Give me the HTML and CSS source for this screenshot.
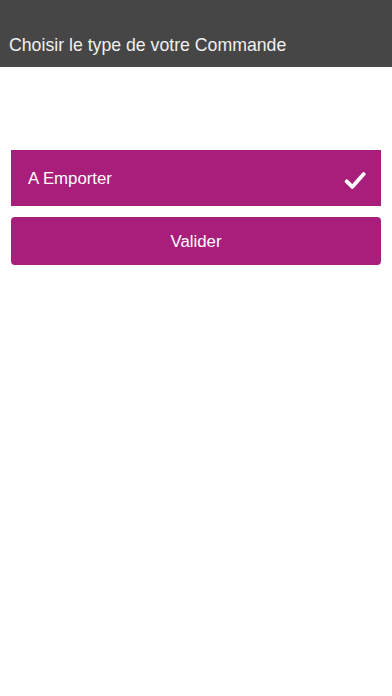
FILE: index.html
```html
<!DOCTYPE html>
<html lang="fr">
<head>
<meta charset="utf-8">
<meta name="viewport" content="width=device-width, initial-scale=1">
<title>Choisir le type de votre Commande</title>
<link rel="stylesheet" href="styles.css">
</head>
<body>
<header class="topbar">
  <h1 class="title">Choisir le type de votre Commande</h1>
</header>
<main class="content">
  <div class="option">
    <span class="option-label">A Emporter</span>
    <svg class="check" viewBox="0 0 24 20" width="22" height="19" aria-hidden="true">
      <path d="M3 11 L9 17 L21.5 3" fill="none" stroke="#fff" stroke-width="4.2" stroke-linecap="round" stroke-linejoin="round"/>
    </svg>
  </div>
  <button class="validate" type="button">Valider</button>
</main>
</body>
</html>
```
FILE: styles.css
```css
html, body {
  margin: 0;
  padding: 0;
  background: #ffffff;
  font-family: "Liberation Sans", Arial, sans-serif;
}
.topbar {
  height: 67px;
  background: #464646;
  display: flex;
  align-items: flex-end;
  padding: 0 9px 11px;
  box-sizing: border-box;
}
.title {
  margin: 0;
  font-size: 17.7px;
  font-weight: 400;
  color: #f0f0f0;
  line-height: 22px;
}
.content {
  padding: 83px 11px 0;
  display: flex;
  flex-direction: column;
  gap: 11px;
}
.option {
  height: 56px;
  background: #a91e7b;
  display: flex;
  align-items: center;
  justify-content: space-between;
  padding: 0 15px 0 17px;
  box-sizing: border-box;
}
.option-label {
  color: #ffffff;
  font-size: 16.8px;
  padding-top: 1px;
}
.check {
  display: block;
  margin-top: 5px;
}
.validate {
  height: 48px;
  border: none;
  border-radius: 4px;
  background: #a91e7b;
  color: #ffffff;
  font-family: "Liberation Sans", Arial, sans-serif;
  font-size: 16.8px;
  padding: 2px 0 0;
  margin: 0;
  cursor: pointer;
}
```
